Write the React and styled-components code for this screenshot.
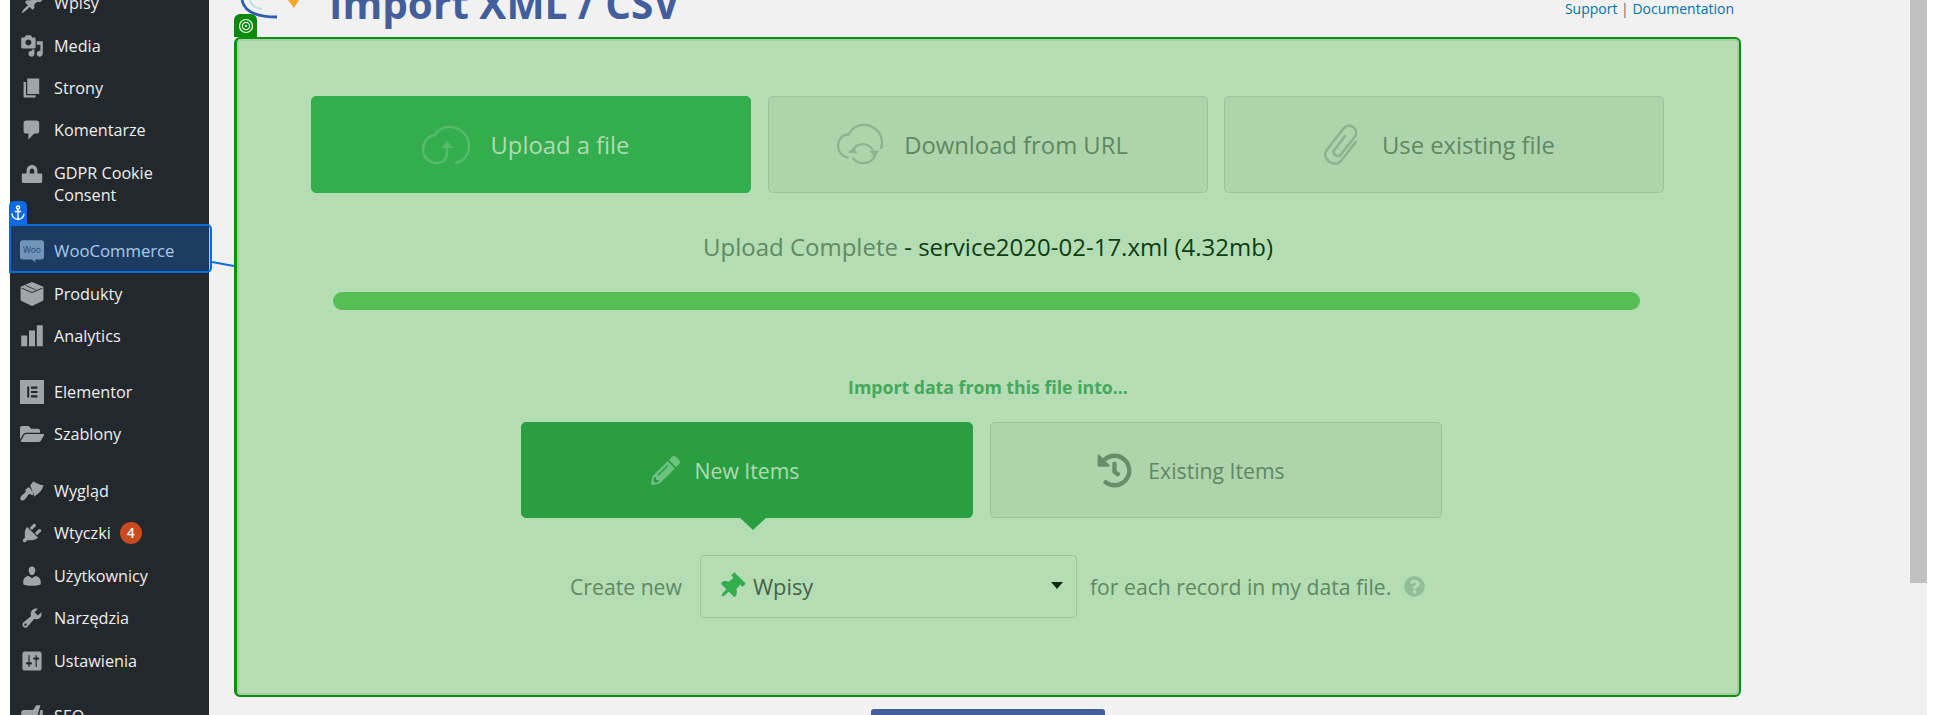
import React from 'react'
import styled, { createGlobalStyle } from 'styled-components'
import { FaPencilAlt, FaHistory, FaQuestionCircle, FaFolderOpen, FaThumbtack } from 'react-icons/fa'

const GlobalStyle = createGlobalStyle`
    html, body {
        margin: 0;
        height: 100%;
        overflow: hidden;
        background: #f1f1f1;
    }
    #root {
        height: 100%;
    }
`

const Page = styled.div`
    display: flex;
    height: 715px;
    overflow: hidden;
    font-family: 'Open Sans', 'Liberation Sans', sans-serif;
`

const Gutter = styled.div`
    width: ${(p) => p.$width};
    flex: none;
    background: #fff;
`

const Sidebar = styled.nav`
    position: relative;
    width: 199px;
    flex: none;
    background: #23282d;
`

const MenuScroll = styled.ul`
    list-style: none;
    margin: 0;
    padding: 0;
    transform: translateY(-18px);
`

const MenuItem = styled.li`
    display: flex;
    align-items: ${(p) => (p.$wrap ? 'flex-start' : 'center')};
    min-height: 42.4px;
    margin-top: ${(p) => p.$gap || 0}px;
    padding: ${(p) => (p.$wrap ? '10px 0 11px 10px' : '0 0 0 10px')};
    color: #eeeeee;
    font-size: ${(p) => (p.$active ? '16.7px' : '16.2px')};
    line-height: 22px;
`

const MenuIcon = styled.svg`
    width: 24px;
    height: 24px;
    flex: none;
    margin-right: 10px;
    fill: #a0a5aa;
`

const MenuLabel = styled.span`
    max-width: 135px;
`

const Badge = styled.span`
    display: inline-flex;
    align-items: center;
    justify-content: center;
    width: 22px;
    height: 22px;
    margin-left: 9px;
    border-radius: 50%;
    background: #ca4a1f;
    color: #fff;
    font-size: 13.5px;
    font-weight: 600;
`

const Selection = styled.div`
    position: absolute;
    left: -1px;
    top: 224px;
    width: 203px;
    height: 49px;
    box-sizing: border-box;
    border: 2px solid #0b6be0;
    border-radius: 0 5px 5px 0;
    background: rgba(11, 107, 224, 0.3);
    z-index: 2;
`

const AnchorTag = styled.div`
    position: absolute;
    left: -1px;
    top: 201px;
    width: 18px;
    height: 23px;
    border-radius: 5px 5px 0 0;
    background: #0b6be0;
    color: #fff;
    display: flex;
    align-items: center;
    justify-content: center;
    z-index: 2;
`

const Connector = styled.svg`
    position: absolute;
    left: 202px;
    top: 258px;
    width: 22px;
    height: 12px;
    z-index: 2;
`

const Main = styled.main`
    flex: none;
    width: 1701px;
    padding-left: 25px;
    box-sizing: border-box;
`

const Header = styled.header`
    position: relative;
    height: 37px;
    width: 1507px;
    overflow: hidden;
    display: flex;
    align-items: flex-end;
    justify-content: space-between;
`

const Brand = styled.div`
    display: flex;
    align-items: flex-end;
    margin-left: 5px;
`

const Logo = styled.svg`
    width: 66px;
    height: 37px;
    flex: none;
    margin-right: 24px;
`

const Title = styled.h1`
    margin: 0 0 7px;
    font-size: 40.5px;
    line-height: 52px;
    font-weight: 700;
    color: #425f9b;
    white-space: nowrap;
`

const HelpLinks = styled.div`
    align-self: flex-start;
    margin-right: 7px;
    font-size: 14px;
    line-height: 17px;
    color: #666;

    a {
        color: #0073aa;
        text-decoration: none;
    }
`

const Panel = styled.section`
    position: relative;
    width: 1507px;
    height: 660px;
    box-sizing: border-box;
    padding: 57px 74px 0;
    border: 2px solid #0a8f0e;
    border-left-width: 3px;
    border-radius: 6px;
    background: #b4ddb4;
    box-shadow: inset 0 0 0 2px #a5cea6;
`

const PanelTag = styled.div`
    position: absolute;
    left: -3px;
    top: -25px;
    width: 23px;
    height: 23px;
    border-radius: 6px 6px 0 0;
    background: #0a8a0a;
    display: flex;
    align-items: center;
    justify-content: center;
`

const TabRow = styled.div`
    display: flex;
    justify-content: ${(p) => (p.$center ? 'center' : 'flex-start')};
    gap: ${(p) => (p.$center ? '17px' : '16.5px')};
    margin-right: ${(p) => (p.$center ? '13px' : '0')};
`

const Tab = styled.div`
    position: relative;
    box-sizing: border-box;
    width: ${(p) => p.$width};
    height: ${(p) => p.$height};
    padding-right: ${(p) => p.$inset};
    display: flex;
    align-items: center;
    justify-content: center;
    gap: ${(p) => p.$iconGap};
    border-radius: 5px;
    border: 1px solid ${(p) => (p.$active ? p.$fill : '#9ac29b')};
    background: ${(p) => (p.$active ? p.$fill : '#aed4ac')};
    color: ${(p) => (p.$active ? '#aedcb2' : '#5f8862')};
    font-size: ${(p) => p.$size};

    svg {
        flex: none;
        color: ${(p) => p.$icon};
    }
`

const Caret = styled.span`
    position: absolute;
    left: 50%;
    bottom: -13px;
    margin-left: -8px;
    border-style: solid;
    border-width: 13px 14px 0;
    border-color: #2a9f42 transparent transparent;
`

const Status = styled.div`
    margin-top: 39px;
    text-align: center;
    font-size: 24px;
    line-height: 30px;
    color: #0e3d12;

    span {
        color: #5f8a62;
    }
`

const Progress = styled.div`
    height: 18px;
    margin: 30px 25px 0 22px;
    border-radius: 9px;
    background: #55bf55;
`

const Prompt = styled.div`
    margin-top: 66px;
    margin-bottom: 24px;
    text-align: center;
    font-size: 17.7px;
    line-height: 22px;
    font-weight: 700;
    color: #46a85c;
`

const CreateRow = styled.div`
    display: flex;
    align-items: center;
    margin-top: 37px;
    margin-left: 259px;
    color: #5f8862;
    font-size: 21.2px;
`

const SelectBox = styled.div`
    box-sizing: border-box;
    width: 377px;
    height: 63px;
    margin: 0 13px 0 18px;
    padding: 0 13px 0 17px;
    display: flex;
    align-items: center;
    border: 1px solid #9ac29b;
    border-radius: 4px;
    color: #45634a;
    font-size: 21.8px;

    svg {
        color: #33ad4e;
        margin-right: 9px;
        transform: rotate(45deg);
    }
`

const SelectCaret = styled.span`
    margin-left: auto;
    margin-top: -3px;
    border-style: solid;
    border-width: 7px 6.5px 0;
    border-color: #0c2b10 transparent transparent;
`

const HelpIcon = styled(FaQuestionCircle)`
    margin-left: 13px;
    color: #93bd95;
`

const SubmitButton = styled.div`
    width: 234px;
    height: 20px;
    margin: 12px 0 0 637px;
    border-radius: 3px 3px 0 0;
    background: #425f9b;
`

const Track = styled.aside`
    flex: none;
    width: 17px;
`

const Thumb = styled.div`
    height: 583px;
    background: #c1c1c1;
`

const menu = [
    { key: 'post', label: 'Wpisy', d: 'M10.44 3.02l1.82-1.82 6.36 6.35-1.83 1.82c-1.05-.68-2.48-.57-3.41.36l-.75.75c-.92.93-1.04 2.35-.35 3.41l-1.83 1.82-2.41-2.41-2.8 2.79c-.42.42-3.38 2.71-3.8 2.29s1.86-3.39 2.28-3.81l2.79-2.79L4.1 9.36l1.83-1.82c1.05.69 2.48.57 3.4-.36l.75-.75c.93-.92 1.05-2.35.36-3.41z' },
    { key: 'media', label: 'Media', d: 'M13 11V4c0-.55-.45-1-1-1h-1.67L9 1H5L3.67 3H2c-.55 0-1 .45-1 1v7c0 .55.45 1 1 1h10c.55 0 1-.45 1-1zM7 4.5c1.38 0 2.5 1.12 2.5 2.5S8.38 9.5 7 9.5 4.5 8.38 4.5 7 5.62 4.5 7 4.5zM14 6h5v10.5c0 1.38-1.12 2.5-2.5 2.5S14 17.88 14 16.5s1.12-2.5 2.5-2.5c.17 0 .34.02.5.05V9h-3V6zm-4 8.05V13h2v3.5c0 1.38-1.12 2.5-2.5 2.5S7 17.88 7 16.5 8.12 14 9.5 14c.17 0 .34.02.5.05z' },
    { key: 'page', label: 'Strony', d: 'M6 15V2h10v13H6zm-1 1h8v2H3V5h2v11z' },
    { key: 'comments', label: 'Komentarze', d: 'M5 2h9c1.1 0 2 .9 2 2v7c0 1.1-.9 2-2 2h-2l-5 5v-5H5c-1.1 0-2-.9-2-2V4c0-1.1.9-2 2-2z' },
    { key: 'gdpr', label: 'GDPR Cookie Consent', wrap: true, d: 'M14.5 9.5h3c.55 0 1 .45 1 1v6c0 .55-.45 1-1 1h-15c-.55 0-1-.45-1-1v-6c0-.55.45-1 1-1h3V7c0-2.5 2-4.5 4.5-4.5s4.5 2 4.5 4.5v2.5zm-2.6 0V7.500c0-1.100-.9-2-1.900-2s-1.900.9-1.900 2v2h3.800z' },
    { key: 'woo', label: 'WooCommerce', gap: 13.4, woo: true },
    { key: 'products', label: 'Produkty', d: 'M10 0l9.500 4v11.500L10 20 .5 15.500V4L10 0zM1.500 4.800l-.3.6L10 9.200l8.800-3.800-.3-.6L10 8.400 1.500 4.800zM5 2.800l-.3.5 9 3.800.3-.5-9-3.800z' },
    { key: 'analytics', label: 'Analytics', d: 'M1 9.500h5v9H1zM7.500 5.500h5v13h-5zM14 1h5v17.500h-5z' },
    { key: 'elementor', label: 'Elementor', gap: 13.4, d: 'M0 0h20v20H0V0zm6 5.500v9h1.700v-9H6zm3.200 0v1.700h5.300V5.500H9.200zm0 3.650v1.700h5.300v-1.700H9.200zm0 3.650v1.700h5.300v-1.700H9.200z' },
    { key: 'templates', label: 'Szablony', folder: true },
    { key: 'appearance', label: 'Wygląd', gap: 14.6, d: 'M8.500 5.500L11 2l3 1.600c2 1 3.800 1.600 5.600 1.600-.8 3.400-3 6.300-6.600 8.600l-.9.900L8.500 5.500zM7.500 6.700l4.200 5.500-1.500 1.400-1.600-.9c-.5-.3-1-.2-1.400.2L4 17c-1 1-2.500 1.200-3.300.4-.8-.8-.5-2.200.4-3.200l3.300-3.200c.4-.4.5-.9.2-1.400L4 9.100l3.500-2.400z' },
    { key: 'plugins', label: 'Wtyczki', badge: '4', d: 'M13.11 4.36L9.87 7.6 8 5.73l3.24-3.24c.35-.34 1.05-.2 1.56.32.52.51.66 1.21.31 1.55zm-8 1.77l.91-1.12 9.01 9.01-1.19.84c-.71.71-2.63 1.16-3.82 1.16H6.14L4.9 17.26c-.59.59-1.54.59-2.12 0-.59-.58-.59-1.53 0-2.12l1.24-1.24v-3.88c0-1.13.4-3.19 1.09-3.89zm7.26 3.97l3.24-3.24c.34-.35 1.04-.21 1.55.31.52.51.66 1.21.31 1.55l-3.24 3.25z' },
    { key: 'users', label: 'Użytkownicy', d: 'M10 9.25c-2.27 0-2.73-3.44-2.73-3.44C7 4.02 7.82 2 9.97 2c2.16 0 2.98 2.02 2.71 3.81 0 0-.41 3.44-2.68 3.44zm0 2.57L12.72 10c2.39 0 4.52 2.33 4.52 4.53v2.49s-3.65 1.13-7.24 1.13c-3.65 0-7.24-1.13-7.24-1.13v-2.49c0-2.25 1.94-4.48 4.47-4.48z' },
    { key: 'tools', label: 'Narzędzia', d: 'M16.68 9.77c-1.34 1.34-3.3 1.67-4.95.99l-5.41 6.52c-.99.99-2.59.99-3.58 0s-.99-2.59 0-3.57l6.52-5.42c-.68-1.65-.35-3.61.99-4.95 1.28-1.28 3.12-1.62 4.72-1.06l-2.89 2.89 2.82 2.82 2.86-2.87c.53 1.58.18 3.39-1.08 4.65zM3.81 16.21c.4.39 1.04.39 1.43 0 .4-.4.4-1.04 0-1.43-.39-.4-1.03-.4-1.43 0-.39.39-.39 1.03 0 1.43z' },
    { key: 'settings', label: 'Ustawienia', d: 'M18 16V4c0-1.1-.9-2-2-2H4c-1.1 0-2 .9-2 2v12c0 1.1.9 2 2 2h12c1.1 0 2-.9 2-2zM8 11h1c.55 0 1 .45 1 1s-.45 1-1 1H8v1.5c0 .28-.22.5-.5.5s-.5-.22-.5-.5V13H6c-.55 0-1-.45-1-1s.45-1 1-1h1V5.5c0-.28.22-.5.5-.5s.5.22.5.5V11zm5-2h-1c-.55 0-1-.45-1-1s.45-1 1-1h1V5.5c0-.28.22-.5.5-.5s.5.22.5.5V7h1c.55 0 1 .45 1 1s-.45 1-1 1h-1v5.500c0 .28-.22.5-.5.5s-.5-.22-.5-.5V9z' },
    { key: 'seo', label: 'SEO', gap: 13.4, d: 'M3 5h8l2.500-4H17l-5 18H3c-1.100 0-2-.9-2-2V7c0-1.100.9-2 2-2zm14 0h2v12c0 1.100-.9 2-2 2h-3z' },
]

const WooGlyph = () => (
    <MenuIcon viewBox="0 0 20 20">
        <path d="M2 1h16c1.100 0 2 .9 2 2v12c0 1.100-.9 2-2 2h-5.500l.7 2.500-3.400-2.500H2c-1.100 0-2-.9-2-2V3c0-1.100.9-2 2-2z" />
        <text x="10" y="11.500" textAnchor="middle" fontSize="7" fill="#2c3a4a" fontFamily="'Open Sans', sans-serif">Woo</text>
    </MenuIcon>
)

const CloudUpload = ({ color }) => (
    <svg width="50" height="40" viewBox="0 0 50 40" fill="none" stroke={color} strokeWidth="2.400" strokeLinecap="round">
        <path d="M35 38c8-2 13-9 13-17C48 10 39 2 28 2c-6 0-11 3-14 8C7 11 2 17 2 24c0 8 6 14 14 14 6 0 10-4 10-10v-8" />
        <path d="M20 23l6-7 6 7z" fill={color} stroke="none" />
    </svg>
)

const CloudSync = ({ color }) => (
    <svg width="50" height="44" viewBox="0 0 50 46" fill="none" stroke={color} strokeWidth="2.400" strokeLinecap="round">
        <path d="M47 26c1-2 1-4 1-6C48 10 39 2 29 2c-7 0-13 4-16 10C6 12 2 18 2 24c0 6 4 11 10 12" />
        <path d="M17 30c2-5 6-8 11-8 4 0 8 2 10 6" />
        <path d="M41 33c-2 6-7 9-13 9-4 0-8-2-10-5" />
        <path d="M12 31l6-5 5 6zM35 29h10l-5 6z" fill={color} stroke="none" />
    </svg>
)

const Clip = ({ color }) => (
    <svg width="42" height="44" viewBox="0 0 42 44" fill="none" stroke={color} strokeWidth="2.600" strokeLinecap="round">
        <path
            transform="rotate(38 21 22) translate(4 -1)"
            d="M26 12V36C26 41 22 44 17 44C12 44 8 41 8 36V9C8 5 11 2 15 2C19 2 22 5 22 9V32C22 34 20 35 17 35C15 35 14 34 14 32V14"
        />
    </svg>
)

const App = () => (
    <>
        <GlobalStyle />
        <Page>
            <Gutter $width="10px" />
            <Sidebar>
                <MenuScroll>
                    {menu.map((m) => (
                        <MenuItem key={m.key} $gap={m.gap} $wrap={m.wrap} $active={m.woo}>
                            {m.woo ? (
                                <WooGlyph />
                            ) : m.folder ? (
                                <MenuIcon as={FaFolderOpen} />
                            ) : (
                                <MenuIcon viewBox="0 0 20 20">
                                    <path d={m.d} fillRule="evenodd" />
                                </MenuIcon>
                            )}
                            <MenuLabel>{m.label}</MenuLabel>
                            {m.badge && <Badge>{m.badge}</Badge>}
                        </MenuItem>
                    ))}
                </MenuScroll>
                <AnchorTag>
                    <svg width="14" height="16" viewBox="0 0 14 16" fill="none" stroke="#fff" strokeWidth="1.400">
                        <circle cx="7" cy="2.600" r="1.600" />
                        <path d="M7 4v10.500M3.800 6.500h6.400M1 8.500c0 3.500 3 5.500 6 6 3-.5 6-2.500 6-6" />
                    </svg>
                </AnchorTag>
                <Selection />
                <Connector viewBox="0 0 22 12">
                    <path d="M0 4l22 4" stroke="#0b6be0" strokeWidth="2" />
                </Connector>
            </Sidebar>
            <Main>
                <Header>
                    <Brand>
                        <Logo viewBox="0 0 66 37">
                            <path d="M3 0c2 11 14 17 35 17" fill="none" stroke="#2d5bb0" strokeWidth="2.800" />
                            <path d="M11 0c1 5 5 8 12 9" fill="none" stroke="#bfe0ea" strokeWidth="2" />
                            <path d="M49 0h11l-5 8z" fill="#f5a623" />
                        </Logo>
                        <Title>Import XML / CSV</Title>
                    </Brand>
                    <HelpLinks>
                        <a>Support</a> | <a>Documentation</a>
                    </HelpLinks>
                </Header>
                <Panel>
                    <PanelTag>
                        <svg width="16" height="16" viewBox="0 0 16 16" fill="none" stroke="#fff">
                            <circle cx="8" cy="8" r="6.500" strokeWidth="1.200" />
                            <circle cx="8" cy="8" r="3.600" strokeWidth="1.200" />
                            <circle cx="8" cy="8" r="1" fill="#fff" stroke="none" />
                        </svg>
                    </PanelTag>
                    <TabRow>
                        <Tab $active $fill="#33ad4e" $width="440px" $height="97px" $size="23.8px" $iconGap="20px" $icon="#57bb6e" $inset="12px">
                            <CloudUpload color="#57bb6e" />
                            Upload a file
                        </Tab>
                        <Tab $width="440px" $height="97px" $size="23.8px" $iconGap="19px" $icon="#8cb48d" $inset="12px">
                            <CloudSync color="#8cb48d" />
                            Download from URL
                        </Tab>
                        <Tab $width="440px" $height="97px" $size="23.8px" $iconGap="19px" $icon="#8cb48d" $inset="12px">
                            <Clip color="#8cb48d" />
                            Use existing file
                        </Tab>
                    </TabRow>
                    <Status>
                        <span>Upload Complete</span> - service2020-02-17.xml (4.32mb)
                    </Status>
                    <Progress />
                    <Prompt>Import data from this file into...</Prompt>
                    <TabRow $center>
                        <Tab $active $fill="#2a9f42" $width="452px" $height="96px" $size="21.2px" $iconGap="15px" $icon="#6cc27f" $inset="44px">
                            <FaPencilAlt size={29} />
                            New Items
                            <Caret />
                        </Tab>
                        <Tab $width="452px" $height="96px" $size="21.2px" $iconGap="16px" $icon="#668f68" $inset="50px">
                            <FaHistory size={35} />
                            Existing Items
                        </Tab>
                    </TabRow>
                    <CreateRow>
                        Create new
                        <SelectBox>
                            <FaThumbtack size={26} />
                            Wpisy
                            <SelectCaret />
                        </SelectBox>
                        for each record in my data file.
                        <HelpIcon size={21} />
                    </CreateRow>
                </Panel>
                <SubmitButton />
            </Main>
            <Track>
                <Thumb />
            </Track>
            <Gutter $width="11px" />
        </Page>
    </>
)

export default App
